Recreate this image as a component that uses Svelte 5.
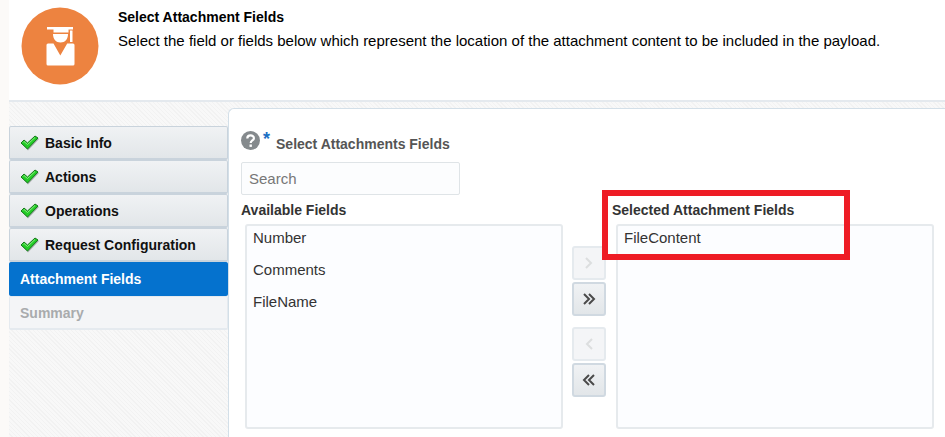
<script lang="ts">
	type Status = 'done' | 'current' | 'disabled';

	interface Step {
		label: string;
		status: Status;
	}

	const steps: Step[] = [
		{ label: 'Basic Info', status: 'done' },
		{ label: 'Actions', status: 'done' },
		{ label: 'Operations', status: 'done' },
		{ label: 'Request Configuration', status: 'done' },
		{ label: 'Attachment Fields', status: 'current' },
		{ label: 'Summary', status: 'disabled' }
	];

	let search = $state('');
	let available = $state(['Number', 'Comments', 'FileName']);
	let selected = $state(['FileContent']);
	let pickedAvailable = $state<string[]>([]);
	let pickedSelected = $state<string[]>([]);

	let filtered = $derived(
		available.filter((field) => field.toLowerCase().includes(search.toLowerCase()))
	);

	function add(fields: string[]) {
		selected = [...selected, ...fields];
		available = available.filter((field) => !fields.includes(field));
		pickedAvailable = [];
	}

	function remove(fields: string[]) {
		available = [...available, ...fields];
		selected = selected.filter((field) => !fields.includes(field));
		pickedSelected = [];
	}
</script>

<div class="page">
	<header>
		<svg class="logo" viewBox="0 0 78 78" aria-hidden="true">
			<circle cx="39" cy="39" r="38.5" fill="#ed8340" />
			<g fill="#fff">
				<path d="M26 20h26v2.500h-4.500v3h-15v-3H26z" />
				<path d="M32 27h15c0 5-3 8.500-7.500 8.500S32 32 32 27z" />
				<path d="M49 23.500h2.500V35H49z" />
				<path
					d="M27 36.500h5.500l6.800 12 6.900-12H52q1.500 0 1.500 1.500v19q0 1.500-1.500 1.500H27q-1.500 0-1.500-1.500V38q0-1.500 1.500-1.500z"
				/>
			</g>
		</svg>
		<div class="intro">
			<h1>Select Attachment Fields</h1>
			<p>
				Select the field or fields below which represent the location of the attachment content to be
				included in the payload.
			</p>
		</div>
	</header>

	<div class="body">
		<nav>
			{#each steps as step}
				<button
					type="button"
					class="step {step.status}"
					disabled={step.status === 'disabled'}
					aria-current={step.status === 'current' ? 'step' : undefined}
				>
					{#if step.status === 'done'}
						<svg class="check" viewBox="0 0 20 16" aria-hidden="true">
							<path d="M2 9l3-2 3 3 8-8 3 2L8 15.500z" fill="#8f9895" opacity="0.7" />
							<path
								d="M1 8l3-3 3.500 3L15 1l3 2L7.500 14z"
								fill="#22cc26"
								stroke="#157a1a"
								stroke-linejoin="round"
							/>
							<path d="M3 7.500l1-1 3.500 3L15 2.500" fill="none" stroke="#8bee82" />
						</svg>
					{/if}
					{step.label}
				</button>
			{/each}
		</nav>

		<main>
			<div class="search-label">
				<svg class="help" viewBox="0 0 19 19" aria-hidden="true">
					<circle cx="9.500" cy="9.500" r="9.500" fill="#858a8d" />
					<path
						d="M6.300 7.500c0-4 6.600-4 6.600-.300 0 2.300-3.200 2.300-3.200 4.800"
						fill="none"
						stroke="#fff"
						stroke-width="2.200"
					/>
					<rect x="8.500" y="13.500" width="2.400" height="2.400" fill="#fff" />
				</svg>
				<span class="required">*</span>
				<label for="search">Select Attachments Fields</label>
			</div>
			<input id="search" type="text" placeholder="Search" bind:value={search} />

			<div class="shuttle">
				<div class="column">
					<label for="available">Available Fields</label>
					<select id="available" multiple bind:value={pickedAvailable}>
						{#each filtered as field}
							<option value={field}>{field}</option>
						{/each}
					</select>
				</div>

				<div class="moves">
					<button
						type="button"
						aria-label="Add"
						disabled={pickedAvailable.length === 0}
						onclick={() => add(pickedAvailable)}
					>
						<svg viewBox="0 0 16 16"><path d="M5 3l5 5-5 5" /></svg>
					</button>
					<button type="button" aria-label="Add all" onclick={() => add(available)}>
						<svg viewBox="0 0 16 16"><path d="M3 3l5 5-5 5M8 3l5 5-5 5" /></svg>
					</button>
					<button
						type="button"
						class="back"
						aria-label="Remove"
						disabled={pickedSelected.length === 0}
						onclick={() => remove(pickedSelected)}
					>
						<svg viewBox="0 0 16 16"><path d="M11 3L6 8l5 5" /></svg>
					</button>
					<button type="button" aria-label="Remove all" onclick={() => remove(selected)}>
						<svg viewBox="0 0 16 16"><path d="M8 3L3 8l5 5M13 3L8 8l5 5" /></svg>
					</button>
				</div>

				<div class="column">
					<label for="selected">Selected Attachment Fields</label>
					<select id="selected" multiple bind:value={pickedSelected}>
						{#each selected as field}
							<option value={field}>{field}</option>
						{/each}
					</select>
					<div class="highlight"></div>
				</div>
			</div>
		</main>
	</div>
</div>

<style>
	:global(body) {
		margin: 0;
		background: #fff;
	}
	.page {
		box-sizing: border-box;
		min-height: 100vh;
		display: flex;
		flex-direction: column;
		border-left: 9px solid #fcfaf8;
		font-family: 'Liberation Sans', Arial, sans-serif;
		font-size: 14px;
		color: #333;
	}
	button,
	input,
	select {
		box-sizing: border-box;
		margin: 0;
		font-family: inherit;
	}
	header {
		display: flex;
		gap: 19px;
		padding: 7px 12px 15px;
		border-bottom: 2px solid #e4e9ee;
	}
	.logo {
		flex: none;
		width: 78px;
		height: 78px;
	}
	.intro {
		line-height: 24px;
		color: #000;
	}
	h1 {
		margin: 0;
		font-size: 14px;
		line-height: 20px;
	}
	p {
		margin: 2px 0 0;
		font-size: 15px;
	}
	.body {
		flex: 1;
		display: flex;
		background: repeating-linear-gradient(45deg, #f8f8f8 0 2px, #f2f2f2 2px 3px);
	}
	nav {
		flex: none;
		width: 219px;
		padding-top: 24px;
	}
	.step {
		display: flex;
		align-items: center;
		gap: 5px;
		width: 100%;
		height: 34px;
		padding: 0 10px;
		border: 1px solid #c9d3dc;
		border-bottom-width: 2px;
		border-radius: 2px;
		background: linear-gradient(#f0f2f4, #e2e6e9);
		font-size: 14px;
		font-weight: bold;
		color: #111;
		text-align: left;
	}
	.step.current {
		border-color: #0572ce;
		background: #0572ce;
		color: #fff;
	}
	.step.disabled {
		border-color: #e5eaef;
		background: #f4f5f7;
		color: #a9abad;
	}
	.check {
		width: 20px;
		height: 16px;
	}
	main {
		flex: 1;
		min-width: 0;
		margin-top: 6px;
		padding: 22px 11px 6px 12px;
		border: 1px solid #d3dfe8;
		border-width: 1px 0 0 1px;
		border-top-left-radius: 6px;
		background: #fff;
	}
	.search-label {
		display: flex;
		align-items: flex-start;
		height: 31px;
		line-height: 26px;
		font-weight: bold;
		color: #555;
	}
	.help {
		width: 19px;
		height: 19px;
	}
	.required {
		margin: 0 6px 0 3px;
		font-size: 18px;
		line-height: 16px;
		color: #1b6fc4;
	}
	input {
		display: block;
		width: 219px;
		height: 33px;
		padding: 0 7px;
		border: 1px solid #dfe4e7;
		border-radius: 2px;
		background: #fcfdfe;
		font-size: 15px;
		color: #333;
	}
	input::placeholder {
		color: #777;
	}
	.shuttle {
		display: flex;
		padding-top: 5px;
	}
	.column {
		position: relative;
		flex: 1;
		display: flex;
		flex-direction: column;
		min-width: 0;
	}
	.column label {
		line-height: 20px;
		font-weight: bold;
		color: #333;
	}
	select {
		height: 205px;
		margin: 4px 0 0 4px;
		padding: 0;
		border: 2px solid #e6eaed;
		border-radius: 3px;
		background: #fcfdff;
		font-size: 15px;
		color: #333;
		overflow: auto;
	}
	option {
		padding: 3px 6px 11px;
	}
	.moves {
		display: flex;
		flex-direction: column;
		gap: 2px;
		padding: 46px 6px 0 9px;
	}
	.moves button {
		display: grid;
		place-items: center;
		width: 34px;
		height: 34px;
		padding: 0;
		border: 2px solid #d0d9e1;
		border-radius: 3px;
		background: linear-gradient(#f0f2f4, #e2e6e9);
		color: #4a4a4a;
	}
	.moves button:disabled {
		border-color: #e5eaee;
		background: #f4f5f7;
		color: #dcdedf;
	}
	.moves .back {
		margin-top: 9px;
	}
	.moves svg {
		width: 16px;
		height: 16px;
		fill: none;
		stroke: currentColor;
		stroke-width: 2;
	}
	.highlight {
		position: absolute;
		top: -10px;
		left: -10px;
		box-sizing: border-box;
		width: 248px;
		height: 70px;
		border: 6px solid #ee1c25;
		pointer-events: none;
	}
</style>
